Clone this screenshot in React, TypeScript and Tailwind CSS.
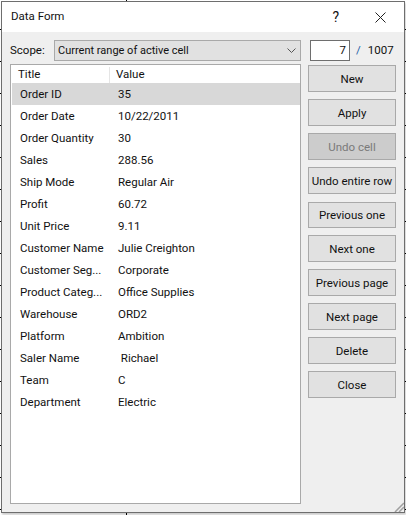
const fields = [
  ["Order ID", "35"],
  ["Order Date", "10/22/2011"],
  ["Order Quantity", "30"],
  ["Sales", "288.56"],
  ["Ship Mode", "Regular Air"],
  ["Profit", "60.72"],
  ["Unit Price", "9.11"],
  ["Customer Name", "Julie Creighton"],
  ["Customer Seg...", "Corporate"],
  ["Product Categ...", "Office Supplies"],
  ["Warehouse", "ORD2"],
  ["Platform", "Ambition"],
  ["Saler Name", "\u00a0Richael"],
  ["Team", "C"],
  ["Department", "Electric"],
];

const buttons = [
  { label: "New", size: "h-[27px]" },
  { label: "Apply", size: "h-[27px]" },
  { label: "Undo cell", size: "h-[27px]", disabled: true },
  { label: "Undo entire row", size: "h-[27px]" },
  { label: "Previous one", size: "h-[26px] mt-px" },
  { label: "Next one", size: "h-[27px]" },
  { label: "Previous page", size: "h-[27px]" },
  { label: "Next page", size: "h-[27px]" },
  { label: "Delete", size: "h-[27px]" },
  { label: "Close", size: "h-[27px]" },
];

export default function App() {
  return (
    <div className="h-[515px] w-[406px] overflow-hidden bg-white bg-[linear-gradient(#000_1px,transparent_1px),linear-gradient(90deg,#000_1px,transparent_1px)] bg-[length:100%_32px,406px_100%] bg-[position:0_29px,126px_0] pt-px pl-px font-['Roboto',sans-serif] text-[11.5px] text-[#111]">
      <div className="relative flex h-[512px] w-[404px] flex-col border border-[#6e6e6e] bg-[#efefef] shadow-[1px_2px_2px_rgba(0,0,0,0.2)]">
        <div className="flex h-[30px] shrink-0 items-center justify-between bg-white pl-[9px]">
          <span>Data Form</span>
          <div className="flex items-center">
            <span className="mr-[36px] text-[14px]">?</span>
            <svg width="11" height="11" viewBox="0 0 11 11" className="mr-[18px]">
              <path d="M0.5 0.5 L10.5 10.5 M10.5 0.5 L0.5 10.5" stroke="#222" fill="none" />
            </svg>
          </div>
        </div>

        <div className="flex flex-1 px-[8px] pt-[8px]">
          <div className="flex w-[291px] flex-col">
            <div className="flex h-[21px] items-center">
              <span className="w-[44px]">Scope:</span>
              <div className="flex h-[21px] flex-1 items-center justify-between border border-[#a9a9a9] bg-[#e1e1e1] pr-[4px] pl-[3px]">
                <span className="pt-px text-[11px]">Current range of active cell</span>
                <svg width="9" height="5" viewBox="0 0 9 5">
                  <path d="M0.5 0.5 L4.5 4.5 L8.5 0.5" stroke="#555" fill="none" />
                </svg>
              </div>
            </div>

            <div className="mt-[3px] flex h-[440px] flex-col border border-[#a9a9a9] bg-white">
              <div className="flex h-[18px] items-center pt-[2px]">
                <span className="w-[98px] pl-[7px]">Title</span>
                <span className="flex h-full items-center border-l border-[#e5e5e5] pl-[6px]">Value</span>
              </div>
              <div>
                {fields.map(([name, value], i) => (
                  <div
                    key={name}
                    className={`ml-px flex h-[22px] items-center pt-px pl-[8px] ${i === 0 ? "bg-[#d8d8d8]" : ""}`}
                  >
                    <span className="w-[98px]">{name}</span>
                    <span>{value}</span>
                  </div>
                ))}
              </div>
            </div>
          </div>

          <div className="ml-[7px] flex w-[88px] flex-col">
            <div className="mb-[4px] flex h-[21px] items-center">
              <div className="ml-[2px] flex h-[21px] w-[40px] items-center justify-end border border-[#6e6e6e] bg-white pr-[3px]">
                7
              </div>
              <span className="ml-[6px] text-[#1f5fa8]">/</span>
              <span className="ml-[7px]">1007</span>
            </div>
            <div className="flex flex-col gap-[7px]">
              {buttons.map((b) => (
                <div
                  key={b.label}
                  className={`flex ${b.size} items-center justify-center border border-[#a9a9a9] pt-[2px] whitespace-nowrap ${b.disabled ? "bg-[#cccccc] text-[#7a7a7a]" : "bg-[#e1e1e1]"}`}
                >
                  {b.label}
                </div>
              ))}
            </div>
          </div>
        </div>

        <svg width="10" height="10" viewBox="0 0 10 10" className="absolute right-0 bottom-0">
          <path d="M1 10 L10 1 M5 10 L10 5" stroke="#a0a0a0" strokeWidth="1.5" fill="none" />
        </svg>
      </div>
    </div>
  );
}
